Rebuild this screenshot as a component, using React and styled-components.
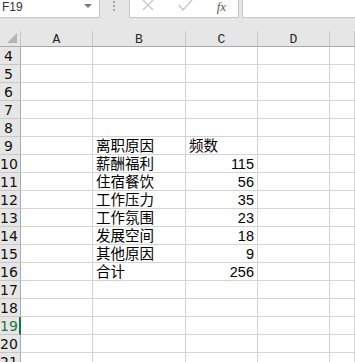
import React from "react";
import styled, { createGlobalStyle } from "styled-components";

const GlobalStyle = createGlobalStyle`
  html, body {
    margin: 0;
    padding: 0;
    background: #ffffff;
  }
`;

const Window = styled.div`
  width: 355px;
  height: 362px;
  overflow: hidden;
  background: #ffffff;
  font-family: "Liberation Sans", "Noto Sans CJK SC", sans-serif;
`;

const FormulaBar = styled.div`
  display: flex;
  align-items: flex-start;
  height: 31px;
  background: #e6e6e6;
  box-sizing: border-box;
`;

const NameBox = styled.div`
  position: relative;
  width: 100px;
  height: 18px;
  box-sizing: border-box;
  background: #ffffff;
  border-right: 1px solid #c6c6c6;
  border-bottom: 1px solid #c6c6c6;
  padding: 1px 0 0 2px;
  font-size: 12px;
  line-height: 12px;
  color: #333333;
`;

const DropArrow = styled.span`
  position: absolute;
  right: 7px;
  top: 4px;
  width: 0;
  height: 0;
  border-left: 4px solid transparent;
  border-right: 4px solid transparent;
  border-top: 4px solid #7a7a7a;
`;

const Grip = styled.div`
  display: flex;
  flex-direction: column;
  gap: 2px;
  margin: 1px 0 0 13px;
`;

const Dot = styled.span`
  width: 2px;
  height: 2px;
  background: #a6a6a6;
`;

const FxBox = styled.div`
  display: flex;
  justify-content: space-around;
  align-items: flex-start;
  width: 110px;
  height: 18px;
  margin-left: 14px;
  box-sizing: border-box;
  background: #ffffff;
  border: 1px solid #c6c6c6;
  border-top: none;
`;

const FxIcon = styled.span`
  font-family: "Liberation Serif", serif;
  font-style: italic;
  font-size: 13px;
  line-height: 14px;
  color: #5a5a5a;
`;

const FormulaInput = styled.div`
  flex: 1;
  height: 18px;
  margin-left: 3px;
  box-sizing: border-box;
  background: #ffffff;
  border-left: 1px solid #c6c6c6;
  border-bottom: 1px solid #c6c6c6;
`;

const Sheet = styled.div`
  display: grid;
  grid-template-columns: 21px 72px 93px 72px 72px 1fr;
  grid-template-rows: 16px;
  grid-auto-rows: 18px;
`;

const Corner = styled.div`
  position: relative;
  background: #e6e6e6;
  border-right: 1px solid #c6c6c6;
  border-bottom: 1px solid #ababab;
  box-sizing: border-box;

  &::after {
    content: "";
    position: absolute;
    right: 3px;
    bottom: 3px;
    width: 0;
    height: 0;
    border-left: 10px solid transparent;
    border-bottom: 10px solid #b4b4b4;
  }
`;

const ColHead = styled.div`
  background: #e6e6e6;
  border-right: 1px solid #c6c6c6;
  border-bottom: 1px solid #ababab;
  box-sizing: border-box;
  text-align: center;
  font-family: "Liberation Mono", monospace;
  font-size: 13px;
  line-height: 17px;
  color: #262626;
`;

const RowHead = styled.div`
  background: #e6e6e6;
  border-right: ${({ $active }) =>
    $active ? "2px solid #217346" : "1px solid #ababab"};
  border-bottom: 1px solid #c8c8c8;
  box-sizing: border-box;
  padding-right: ${({ $active }) => ($active ? "2px" : "3px")};
  text-align: center;
  font-family: "DejaVu Sans", sans-serif;
  font-size: 14px;
  line-height: 18px;
  color: ${({ $active }) => ($active ? "#217346" : "#111111")};
  overflow: hidden;
  white-space: nowrap;
`;

const Cell = styled.div`
  border-right: 1px solid #d4d4d4;
  border-bottom: 1px solid #d4d4d4;
  box-sizing: border-box;
  padding: 1px 3px 0 3px;
  font-size: 14.5px;
  line-height: 17px;
  color: #000000;
  text-align: ${({ $num }) => ($num ? "right" : "left")};
  white-space: nowrap;
  overflow: hidden;
`;

const data = {
  9: ["离职原因", "频数"],
  10: ["薪酬福利", 115],
  11: ["住宿餐饮", 56],
  12: ["工作压力", 35],
  13: ["工作氛围", 23],
  14: ["发展空间", 18],
  15: ["其他原因", 9],
  16: ["合计", 256],
};

const columns = ["A", "B", "C", "D", ""];
const rows = Array.from({ length: 18 }, (_, i) => i + 4);

const CrossIcon = () => (
  <svg width="12" height="12" viewBox="0 0 12 12">
    <path d="M1 0 L11 10 M11 0 L1 10" stroke="#c4c4c4" strokeWidth="1.2" fill="none" />
  </svg>
);

const CheckIcon = () => (
  <svg width="15" height="12" viewBox="0 0 15 12">
    <path d="M1 5 L5 10 L14 0" stroke="#c4c4c4" strokeWidth="1.3" fill="none" />
  </svg>
);

export default function App() {
  return (
    <Window>
      <GlobalStyle />
      <FormulaBar>
        <NameBox>
          F19
          <DropArrow />
        </NameBox>
        <Grip>
          <Dot />
          <Dot />
          <Dot />
        </Grip>
        <FxBox>
          <CrossIcon />
          <CheckIcon />
          <FxIcon>fx</FxIcon>
        </FxBox>
        <FormulaInput />
      </FormulaBar>
      <Sheet>
        <Corner />
        {columns.map((c, i) => (
          <ColHead key={i}>{c}</ColHead>
        ))}
        {rows.map((r) => {
          const row = data[r] || [];
          return (
            <React.Fragment key={r}>
              <RowHead $active={r === 19}>{r}</RowHead>
              <Cell />
              <Cell>{row[0]}</Cell>
              <Cell $num={typeof row[1] === "number"}>{row[1]}</Cell>
              <Cell />
              <Cell />
            </React.Fragment>
          );
        })}
      </Sheet>
    </Window>
  );
}
